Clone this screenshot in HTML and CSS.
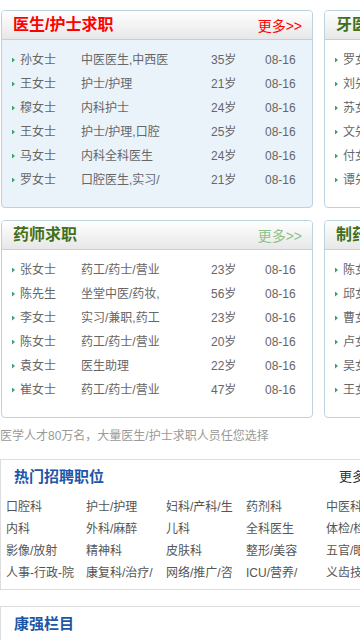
FILE: index.html
```html
<!DOCTYPE html>
<html lang="zh-CN">
<head>
<meta charset="UTF-8" />
<meta name="viewport" content="width=device-width, initial-scale=1" />
<title>医学人才求职</title>
<link rel="stylesheet" href="styles.css">
</head>
<body>
  <div class="page">
    <div class="boards">
      <section class="board board-active">
        <div class="board-head">
          <h2 class="title-red">医生/护士求职</h2>
          <a class="more more-red" href="#">更多&gt;&gt;</a>
        </div>
        <ul class="list">
          <li><span class="name">孙女士</span><span class="job">中医医生,中西医</span><span class="age">35岁</span><span class="date">08-16</span></li>
          <li><span class="name">王女士</span><span class="job">护士/护理</span><span class="age">21岁</span><span class="date">08-16</span></li>
          <li><span class="name">穆女士</span><span class="job">内科护士</span><span class="age">24岁</span><span class="date">08-16</span></li>
          <li><span class="name">王女士</span><span class="job">护士/护理,口腔</span><span class="age">25岁</span><span class="date">08-16</span></li>
          <li><span class="name">马女士</span><span class="job">内科全科医生</span><span class="age">24岁</span><span class="date">08-16</span></li>
          <li><span class="name">罗女士</span><span class="job">口腔医生,实习/</span><span class="age">21岁</span><span class="date">08-16</span></li>
        </ul>
      </section>

      <section class="board">
        <div class="board-head">
          <h2 class="title-green">牙医求职</h2>
          <a class="more more-green" href="#">更多&gt;&gt;</a>
        </div>
        <ul class="list">
          <li><span class="name">罗女士</span><span class="job">口腔医生</span><span class="age">26岁</span><span class="date">08-16</span></li>
          <li><span class="name">刘先生</span><span class="job">口腔医生,种植</span><span class="age">31岁</span><span class="date">08-16</span></li>
          <li><span class="name">苏女士</span><span class="job">口腔护士</span><span class="age">22岁</span><span class="date">08-16</span></li>
          <li><span class="name">文先生</span><span class="job">口腔医生</span><span class="age">28岁</span><span class="date">08-16</span></li>
          <li><span class="name">付女士</span><span class="job">口腔护士,前台</span><span class="age">24岁</span><span class="date">08-16</span></li>
          <li><span class="name">谭先生</span><span class="job">义齿技工</span><span class="age">33岁</span><span class="date">08-16</span></li>
        </ul>
      </section>

      <section class="board">
        <div class="board-head">
          <h2 class="title-green">药师求职</h2>
          <a class="more more-green" href="#">更多&gt;&gt;</a>
        </div>
        <ul class="list">
          <li><span class="name">张女士</span><span class="job">药工/药士/营业</span><span class="age">23岁</span><span class="date">08-16</span></li>
          <li><span class="name">陈先生</span><span class="job">坐堂中医/药妆,</span><span class="age">56岁</span><span class="date">08-16</span></li>
          <li><span class="name">李女士</span><span class="job">实习/兼职,药工</span><span class="age">23岁</span><span class="date">08-16</span></li>
          <li><span class="name">陈女士</span><span class="job">药工/药士/营业</span><span class="age">20岁</span><span class="date">08-16</span></li>
          <li><span class="name">袁女士</span><span class="job">医生助理</span><span class="age">22岁</span><span class="date">08-16</span></li>
          <li><span class="name">崔女士</span><span class="job">药工/药士/营业</span><span class="age">47岁</span><span class="date">08-16</span></li>
        </ul>
      </section>

      <section class="board">
        <div class="board-head">
          <h2 class="title-green">制药求职</h2>
          <a class="more more-green" href="#">更多&gt;&gt;</a>
        </div>
        <ul class="list">
          <li><span class="name">陈女士</span><span class="job">医药代表</span><span class="age">27岁</span><span class="date">08-16</span></li>
          <li><span class="name">邱女士</span><span class="job">质量管理</span><span class="age">30岁</span><span class="date">08-16</span></li>
          <li><span class="name">曹女士</span><span class="job">医药销售</span><span class="age">25岁</span><span class="date">08-16</span></li>
          <li><span class="name">卢女士</span><span class="job">化验员</span><span class="age">23岁</span><span class="date">08-16</span></li>
          <li><span class="name">吴女士</span><span class="job">医药代表</span><span class="age">29岁</span><span class="date">08-16</span></li>
          <li><span class="name">王女士</span><span class="job">生产操作工</span><span class="age">35岁</span><span class="date">08-16</span></li>
        </ul>
      </section>
    </div>

    <p class="tip">医学人才80万名，大量医生/护士求职人员任您选择</p>

    <section class="box">
      <div class="box-head">
        <h3>热门招聘职位</h3>
        <a class="box-more" href="#">更多</a>
      </div>
      <ul class="jobs">
        <li>口腔科</li>
        <li>护士/护理</li>
        <li>妇科/产科/生</li>
        <li>药剂科</li>
        <li>中医科</li>
        <li>内科</li>
        <li>外科/麻醉</li>
        <li>儿科</li>
        <li>全科医生</li>
        <li>体检/检验</li>
        <li>影像/放射</li>
        <li>精神科</li>
        <li>皮肤科</li>
        <li>整形/美容</li>
        <li>五官/眼科</li>
        <li>人事-行政-院</li>
        <li>康复科/治疗/</li>
        <li>网络/推广/咨</li>
        <li>ICU/营养/</li>
        <li>义齿技工</li>
      </ul>
    </section>

    <section class="box">
      <div class="box-head">
        <h3>康强栏目</h3>
      </div>
    </section>
  </div>
</body>
</html>
```

FILE: styles.css
```css
/* Reset and base */
* {
  box-sizing: border-box;
}
html,
body {
  overflow: hidden;
}
body {
  margin: 0;
  font-family: "Liberation Sans", "Noto Sans CJK SC", sans-serif;
  font-size: 12px;
  color: #666;
  background: #fff;
}
ul {
  margin: 0;
  padding: 0;
  list-style: none;
}
a {
  text-decoration: none;
}
.page {
  width: 660px;
  padding-top: 10px;
}
/* Job seeker boards */
.boards {
  display: grid;
  grid-template-columns: 312px 312px;
  column-gap: 11px;
  row-gap: 12px;
  padding-left: 1px;
}
.board {
  border: 1px solid #bcd3df;
  border-radius: 4px;
  overflow: hidden;
  background: #fff;
}
.board-active {
  background: #ebf3fa;
}
.board-head {
  display: flex;
  justify-content: space-between;
  align-items: center;
  height: 29px;
  padding: 0 10px 0 11px;
  border-bottom: 1px solid #bcd3df;
  background: linear-gradient(#ffffff, #e7e7e7);
}
.board-head h2 {
  margin: 0;
  font-size: 16px;
  font-weight: 700;
  line-height: 28px;
}
.title-red {
  color: #f00;
}
.title-green {
  color: #42701a;
}
.more {
  font-size: 14px;
}
.more-red {
  color: #f00;
}
.more-green {
  color: #8cc18c;
}
/* Rows */
.list {
  padding: 8px 0 15px 10px;
}
.list li {
  display: flex;
  align-items: center;
  height: 24px;
  line-height: 24px;
  white-space: nowrap;
}
.list li::before {
  content: "";
  width: 3px;
  height: 5px;
  margin-right: 5px;
  background: #3f9f70;
  clip-path: polygon(0 0, 100% 50%, 0 100%);
}
.name {
  width: 61px;
}
.job {
  width: 130px;
}
.age {
  width: 54px;
}
.date {
  width: 40px;
}
/* Tip line */
.tip {
  margin: 8px 0 13px;
  line-height: 20px;
  color: #999;
  white-space: nowrap;
}
/* Hot positions */
.box {
  border: 1px solid #ddd;
  padding-bottom: 5px;
  margin-bottom: 16px;
}
.box-head {
  display: flex;
  align-items: center;
  height: 30px;
}
.box-head h3 {
  width: 338px;
  margin: 0;
  padding-left: 13px;
  font-size: 15px;
  font-weight: 700;
  color: #1d56a6;
}
.box-more {
  font-size: 13px;
  color: #333;
}
.jobs {
  display: grid;
  grid-template-columns: repeat(5, 80px);
  margin-top: 6px;
  padding-left: 5px;
}
.jobs li {
  line-height: 22px;
  color: #555;
  white-space: nowrap;
}
```
